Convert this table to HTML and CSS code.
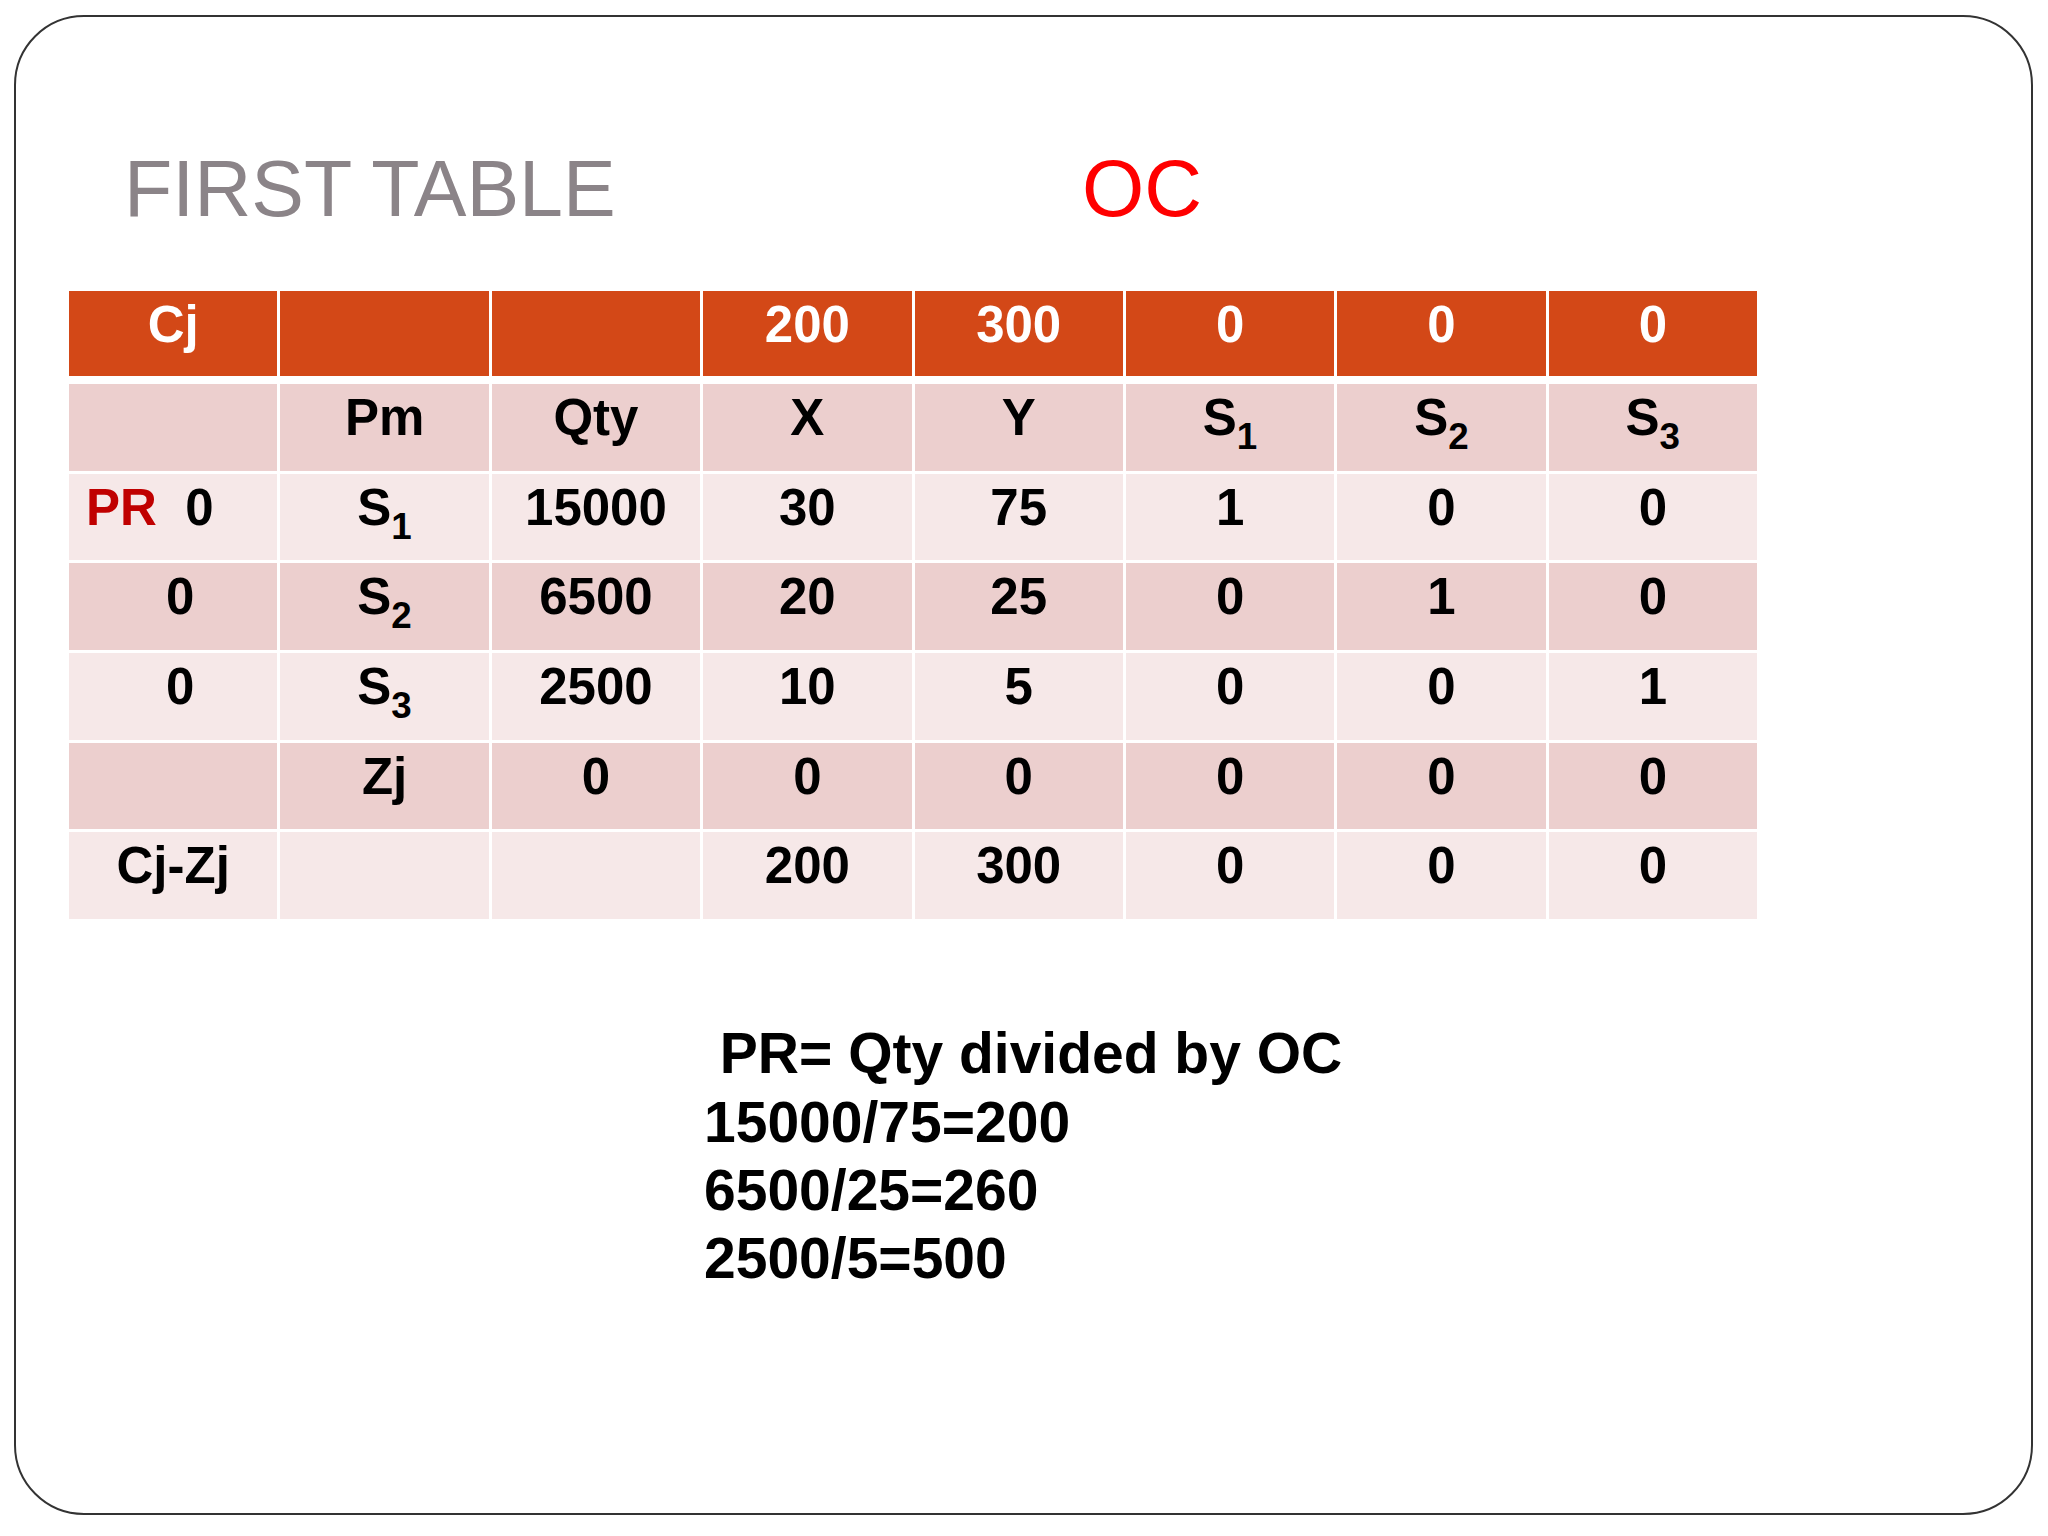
FILE: index.html
```html
<!DOCTYPE html>
<html lang="en">
<head>
<meta charset="utf-8">
<title>First Table</title>
<link rel="stylesheet" href="styles.css">
</head>
<body>
<div class="slide">
  <div class="title-row">
    <h1 class="title">FIRST TABLE</h1>
    <span class="oc">OC</span>
  </div>

  <div class="simplex">
    <div class="row head">
      <div class="cell">Cj</div>
      <div class="cell"></div>
      <div class="cell"></div>
      <div class="cell">200</div>
      <div class="cell">300</div>
      <div class="cell">0</div>
      <div class="cell">0</div>
      <div class="cell">0</div>
    </div>
    <div class="row dark">
      <div class="cell"></div>
      <div class="cell">Pm</div>
      <div class="cell">Qty</div>
      <div class="cell">X</div>
      <div class="cell">Y</div>
      <div class="cell">S<span class="sub">1</span></div>
      <div class="cell">S<span class="sub">2</span></div>
      <div class="cell">S<span class="sub">3</span></div>
    </div>
    <div class="row light">
      <div class="cell left"><span class="pr">PR</span>&nbsp;&nbsp;0</div>
      <div class="cell">S<span class="sub">1</span></div>
      <div class="cell">15000</div>
      <div class="cell">30</div>
      <div class="cell">75</div>
      <div class="cell">1</div>
      <div class="cell">0</div>
      <div class="cell">0</div>
    </div>
    <div class="row dark">
      <div class="cell">&nbsp;0</div>
      <div class="cell">S<span class="sub">2</span></div>
      <div class="cell">6500</div>
      <div class="cell">20</div>
      <div class="cell">25</div>
      <div class="cell">0</div>
      <div class="cell">1</div>
      <div class="cell">0</div>
    </div>
    <div class="row light">
      <div class="cell">&nbsp;0</div>
      <div class="cell">S<span class="sub">3</span></div>
      <div class="cell">2500</div>
      <div class="cell">10</div>
      <div class="cell">5</div>
      <div class="cell">0</div>
      <div class="cell">0</div>
      <div class="cell">1</div>
    </div>
    <div class="row dark">
      <div class="cell"></div>
      <div class="cell">Zj</div>
      <div class="cell">0</div>
      <div class="cell">0</div>
      <div class="cell">0</div>
      <div class="cell">0</div>
      <div class="cell">0</div>
      <div class="cell">0</div>
    </div>
    <div class="row light">
      <div class="cell">Cj-Zj</div>
      <div class="cell"></div>
      <div class="cell"></div>
      <div class="cell">200</div>
      <div class="cell">300</div>
      <div class="cell">0</div>
      <div class="cell">0</div>
      <div class="cell">0</div>
    </div>
  </div>

  <div class="notes">
    <p class="line">&nbsp;PR= Qty divided by OC</p>
    <p class="line">15000/75=200</p>
    <p class="line">6500/25=260</p>
    <p class="line">2500/5=500</p>
  </div>
</div>
</body>
</html>
```

FILE: styles.css
```css
html, body {
  margin: 0;
  padding: 0;
  background: #ffffff;
}

body {
  width: 2048px;
  height: 1536px;
  overflow: hidden;
  font-family: "Liberation Sans", Arial, sans-serif;
}

.slide {
  box-sizing: border-box;
  width: 2019px;
  height: 1500px;
  margin: 15px 0 0 14px;
  border: 2px solid #333333;
  border-radius: 70px;
  background: #ffffff;
  padding-top: 126px;
}

.title-row {
  display: flex;
  align-items: baseline;
  padding-left: 108px;
  height: 92px;
}

.title {
  margin: 0;
  width: 958px;
  font-size: 79px;
  line-height: 92px;
  font-weight: normal;
  color: #8b8488;
}

.oc {
  font-size: 80px;
  line-height: 92px;
  color: #ff0000;
}

.simplex {
  width: 1688px;
  margin: 56px 0 0 53px;
  display: flex;
  flex-direction: column;
  gap: 3px;
}

.row {
  display: grid;
  grid-template-columns: repeat(8, 1fr);
  column-gap: 3px;
  height: 86.7px;
}

.row.head {
  height: 85px;
  margin-bottom: 5px;
}

.cell {
  box-sizing: border-box;
  padding-top: 4px;
  text-align: center;
  font-size: 51px;
  line-height: 60px;
  font-weight: bold;
  color: #000000;
  white-space: nowrap;
}

.head .cell {
  background: #d34817;
  color: #ffffff;
  padding-top: 4px;
}

.dark .cell {
  background: #eccfce;
}

.light .cell {
  background: #f6e8e8;
}

.cell.left {
  text-align: left;
  padding-left: 17px;
}

.pr {
  color: #c00000;
}

.sub {
  font-size: 0.72em;
  line-height: 1;
  vertical-align: -0.37em;
}

.notes {
  margin: 100px 0 0 688px;
}

.line {
  margin: 0;
  font-size: 57px;
  line-height: 68.4px;
  font-weight: bold;
  color: #000000;
  white-space: nowrap;
}
```
